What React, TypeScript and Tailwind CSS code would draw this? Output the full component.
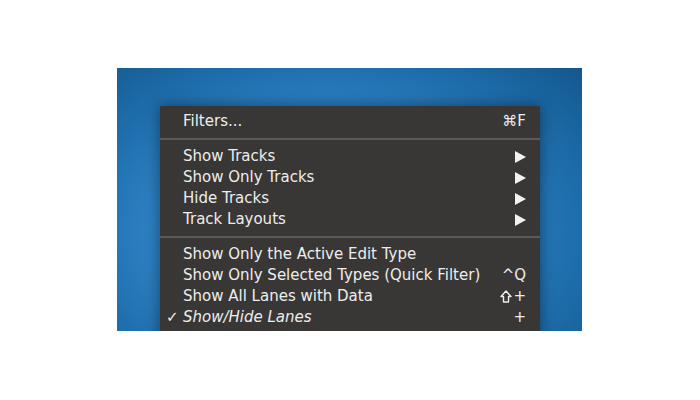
const font = { fontFamily: '"DejaVu Sans", "Liberation Sans", sans-serif' };

function Arrow() {
    return (
        <svg width="11" height="12" viewBox="0 0 11 12" className="block">
            <path d="M0 0 L11 6 L0 12 Z" fill="#f2f2f2" />
        </svg>
    );
}

function ShiftIcon() {
    return (
        <svg width="12" height="13" viewBox="0 0 12 13" className="block mr-[1px]">
            <path d="M6 1 L11 6.5 L8.5 6.5 L8.5 12 L3.5 12 L3.5 6.5 L1 6.5 Z" fill="none" stroke="#ededed" strokeWidth="1.4" strokeLinejoin="round" />
        </svg>
    );
}

function Row({ label, shortcut, checked, italic }: { label: string; shortcut?: React.ReactNode; checked?: boolean; italic?: boolean }) {
    return (
        <div className="relative flex items-center justify-between h-[21px] pl-[23px] pr-[14px]">
            {checked && <span className="absolute left-[6px] text-[15px] font-bold text-[#eeeeee]">✓</span>}
            <span className={`text-[15px] text-[#ededed] ${italic ? 'italic' : ''}`}>{label}</span>
            {shortcut && <span className="flex items-center text-[15px] text-[#ededed]">{shortcut}</span>}
        </div>
    );
}

function Separator() {
    return <div className="my-[6px] h-[2px] bg-[#5c5a58]" />;
}

export default function App() {
    return (
        <div className="w-[700px] h-[400px] bg-white pt-[68px] pl-[117px]" style={font}>
            <div className="w-[465px] h-[263px] overflow-hidden pt-[38px] pl-[43px] bg-[radial-gradient(ellipse_75%_90%_at_45%_62%,#4a9fe0_0%,#3388cc_40%,#1f6fae_70%,#13588d_100%)]">
                {/* Menu */}
                <div className="w-[380px] h-[240px] bg-[#393735] pt-[5px] shadow-[0_0_14px_rgba(0,0,0,0.45)]">
                    <Row label="Filters..." shortcut={<span>⌘F</span>} />
                    <Separator />
                    <Row label="Show Tracks" shortcut={<Arrow />} />
                    <Row label="Show Only Tracks" shortcut={<Arrow />} />
                    <Row label="Hide Tracks" shortcut={<Arrow />} />
                    <Row label="Track Layouts" shortcut={<Arrow />} />
                    <Separator />
                    <Row label="Show Only the Active Edit Type" />
                    <Row label="Show Only Selected Types (Quick Filter)" shortcut={<span>^Q</span>} />
                    <Row label="Show All Lanes with Data" shortcut={<><ShiftIcon /><span>+</span></>} />
                    <Row label="Show/Hide Lanes" shortcut={<span>+</span>} checked italic />
                </div>
            </div>
        </div>
    );
}
